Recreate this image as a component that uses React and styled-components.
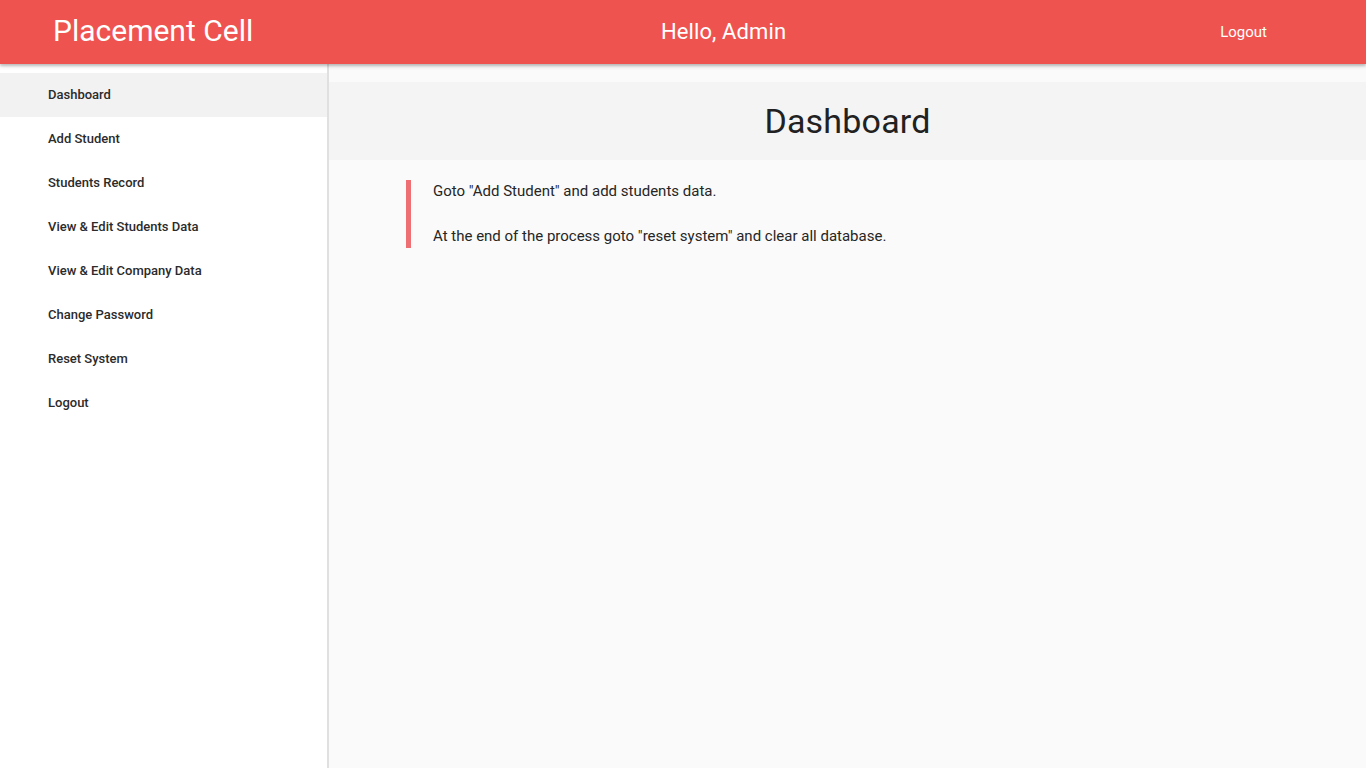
import React from "react";
import styled, { createGlobalStyle } from "styled-components";

const Global = createGlobalStyle`
  html, body { margin: 0; padding: 0; }
  body {
    font-family: Roboto, "Noto Sans", "Liberation Sans", sans-serif;
    background: #fafafa;
    color: rgba(0,0,0,0.87);
  }
  * { box-sizing: border-box; }
`;

const Page = styled.div`
  display: flex;
  flex-direction: column;
  height: 768px;
  overflow: hidden;
`;

const TopBar = styled.header`
  position: relative;
  z-index: 2;
  height: 64px;
  flex: none;
  background: #ef5350;
  color: #fff;
  display: grid;
  grid-template-columns: 608px auto 1fr;
  align-items: center;
  padding: 0 99px 0 53px;
  box-shadow: 0 2px 4px rgba(0,0,0,0.18), 0 2px 2px rgba(0,0,0,0.12);
`;

const Brand = styled.div`
  font-size: 30px;
  font-weight: 400;
  margin-top: -3px;
`;

const Greeting = styled.div`
  font-size: 22px;
  font-weight: 400;
  margin-top: -2px;
  letter-spacing: 0.1px;
`;

const TopLink = styled.a`
  justify-self: end;
  font-size: 15px;
  color: #fff;
  text-decoration: none;
`;

const Body = styled.div`
  flex: 1;
  display: flex;
  min-height: 0;
`;

const Sidebar = styled.nav`
  width: 329px;
  flex: none;
  background: #fff;
  border-right: 2px solid #e0e0e0;
  box-shadow: 1px 0 3px rgba(0,0,0,0.06);
  padding-top: 9px;
  display: flex;
  flex-direction: column;
`;

const NavItem = styled.a`
  height: 44px;
  display: flex;
  align-items: center;
  padding-left: 48px;
  padding-bottom: 1px;
  font-size: 13px;
  font-weight: 500;
  color: #2b2b2b;
  text-decoration: none;
  background: ${(p) => (p.$active ? "#f2f2f2" : "transparent")};
`;

const Main = styled.main`
  flex: 1;
  background: #fafafa;
  padding-top: 18px;
`;

const TitleStrip = styled.div`
  height: 78px;
  background: #f4f4f4;
  display: flex;
  align-items: center;
  justify-content: center;
`;

const Title = styled.h1`
  margin: 0;
  font-size: 34px;
  font-weight: 400;
  color: #212121;
  letter-spacing: 0.2px;
`;

const Content = styled.div`
  padding: 0 77px;
`;

const Quote = styled.blockquote`
  margin: 20px 0;
  padding-left: 22px;
  border-left: 5px solid #ee6e73;
  font-size: 15px;
  line-height: 22.5px;
  color: #262626;
`;

const items = [
  "Dashboard",
  "Add Student",
  "Students Record",
  "View & Edit Students Data",
  "View & Edit Company Data",
  "Change Password",
  "Reset System",
  "Logout",
];

export default function App() {
  return (
    <>
      <Global />
      <Page>
        <TopBar>
          <Brand>Placement Cell</Brand>
          <Greeting>Hello, Admin</Greeting>
          <TopLink href="#">Logout</TopLink>
        </TopBar>
        <Body>
          <Sidebar>
            {items.map((t, i) => (
              <NavItem key={t} href="#" $active={i === 0}>
                {t}
              </NavItem>
            ))}
          </Sidebar>
          <Main>
            <TitleStrip>
              <Title>Dashboard</Title>
            </TitleStrip>
            <Content>
              <Quote>
                Goto "Add Student" and add students data.
                <br />
                <br />
                At the end of the process goto "reset system" and clear all database.
              </Quote>
            </Content>
          </Main>
        </Body>
      </Page>
    </>
  );
}
